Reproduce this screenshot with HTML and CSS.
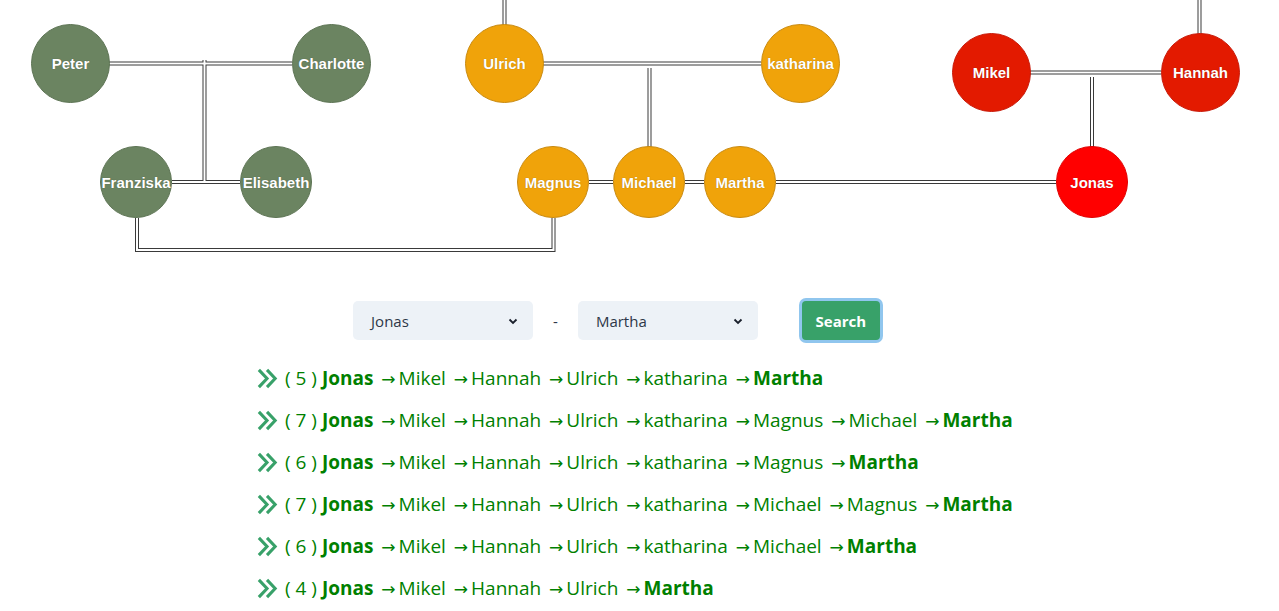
FILE: index.html
```html
<!DOCTYPE html>
<html>
<head>
<meta charset="utf-8">
<link rel="stylesheet" href="styles.css">
</head>
<body>
<div class="tree">
  <svg class="links" width="1279" height="265" viewBox="0 0 1279 265">
    <g class="outer">
      <path d="M109 63.5H292"/>
      <path d="M204.5 60V182"/>
      <path d="M172 182H240"/>
      <path d="M137 218V250H553.5V218"/>
      <path d="M504.5 0V25"/>
      <path d="M543 63.5H761"/>
      <path d="M649.5 68V147"/>
      <path d="M589 182H613M685 182H704M776 182H1056"/>
      <path d="M1030 72.5H1161"/>
      <path d="M1199.5 0V34"/>
      <path d="M1092 77V147"/>
    </g>
    <g class="inner">
      <path d="M109 63.5H292"/>
      <path d="M204.5 60V182"/>
      <path d="M172 182H240"/>
      <path d="M137 218V250H553.5V218"/>
      <path d="M504.5 0V25"/>
      <path d="M543 63.5H761"/>
      <path d="M649.5 68V147"/>
      <path d="M589 182H613M685 182H704M776 182H1056"/>
      <path d="M1030 72.5H1161"/>
      <path d="M1199.5 0V34"/>
      <path d="M1092 77V147"/>
    </g>
  </svg>
  <div class="node big green" style="left:31px;top:24px">Peter</div>
  <div class="node big green" style="left:292px;top:24px">Charlotte</div>
  <div class="node small green" style="left:100px;top:146px">Franziska</div>
  <div class="node small green" style="left:240px;top:146px">Elisabeth</div>
  <div class="node big orange" style="left:465px;top:24px">Ulrich</div>
  <div class="node big orange" style="left:761px;top:24px">katharina</div>
  <div class="node small orange" style="left:517px;top:146px">Magnus</div>
  <div class="node small orange" style="left:613px;top:146px">Michael</div>
  <div class="node small orange" style="left:704px;top:146px">Martha</div>
  <div class="node big red" style="left:952px;top:33px">Mikel</div>
  <div class="node big red" style="left:1161px;top:33px">Hannah</div>
  <div class="node small bright" style="left:1056px;top:146px">Jonas</div>
</div>

<div class="search">
  <div class="select"><span>Jonas</span><svg width="12" height="12" viewBox="0 0 12 12"><path d="M2.5 4.5L6 8L9.5 4.5" fill="none" stroke="#1a202c" stroke-width="1.8"/></svg></div>
  <span class="dash">-</span>
  <div class="select"><span>Martha</span><svg width="12" height="12" viewBox="0 0 12 12"><path d="M2.5 4.5L6 8L9.5 4.5" fill="none" stroke="#1a202c" stroke-width="1.8"/></svg></div>
  <button class="btn">Search</button>
</div>

<ul class="results">
  <li><svg class="chev" viewBox="0 0 24 24"><path d="M3 3L11.5 12L3 21M11.5 3L20 12L11.5 21"/></svg><span>( 5 ) <b>Jonas</b> <i class="arr">→</i>Mikel <i class="arr">→</i>Hannah <i class="arr">→</i>Ulrich <i class="arr">→</i>katharina <i class="arr">→</i><b>Martha</b></span></li>
  <li><svg class="chev" viewBox="0 0 24 24"><path d="M3 3L11.5 12L3 21M11.5 3L20 12L11.5 21"/></svg><span>( 7 ) <b>Jonas</b> <i class="arr">→</i>Mikel <i class="arr">→</i>Hannah <i class="arr">→</i>Ulrich <i class="arr">→</i>katharina <i class="arr">→</i>Magnus <i class="arr">→</i>Michael <i class="arr">→</i><b>Martha</b></span></li>
  <li><svg class="chev" viewBox="0 0 24 24"><path d="M3 3L11.5 12L3 21M11.5 3L20 12L11.5 21"/></svg><span>( 6 ) <b>Jonas</b> <i class="arr">→</i>Mikel <i class="arr">→</i>Hannah <i class="arr">→</i>Ulrich <i class="arr">→</i>katharina <i class="arr">→</i>Magnus <i class="arr">→</i><b>Martha</b></span></li>
  <li><svg class="chev" viewBox="0 0 24 24"><path d="M3 3L11.5 12L3 21M11.5 3L20 12L11.5 21"/></svg><span>( 7 ) <b>Jonas</b> <i class="arr">→</i>Mikel <i class="arr">→</i>Hannah <i class="arr">→</i>Ulrich <i class="arr">→</i>katharina <i class="arr">→</i>Michael <i class="arr">→</i>Magnus <i class="arr">→</i><b>Martha</b></span></li>
  <li><svg class="chev" viewBox="0 0 24 24"><path d="M3 3L11.5 12L3 21M11.5 3L20 12L11.5 21"/></svg><span>( 6 ) <b>Jonas</b> <i class="arr">→</i>Mikel <i class="arr">→</i>Hannah <i class="arr">→</i>Ulrich <i class="arr">→</i>katharina <i class="arr">→</i>Michael <i class="arr">→</i><b>Martha</b></span></li>
  <li><svg class="chev" viewBox="0 0 24 24"><path d="M3 3L11.5 12L3 21M11.5 3L20 12L11.5 21"/></svg><span>( 4 ) <b>Jonas</b> <i class="arr">→</i>Mikel <i class="arr">→</i>Hannah <i class="arr">→</i>Ulrich <i class="arr">→</i><b>Martha</b></span></li>
</ul>
</body>
</html>
```

FILE: styles.css
```css
html, body {
  margin: 0;
  padding: 0;
  background: #ffffff;
}
body {
  font-family: "Open Sans", "Noto Sans", sans-serif;
  overflow: hidden;
}
.tree {
  position: relative;
  height: 265px;
}
.links {
  position: absolute;
  left: 0;
  top: 0;
}
.links path {
  fill: none;
}
.outer path {
  stroke: #3a3a3a;
  stroke-width: 4;
}
.inner path {
  stroke: #ffffff;
  stroke-width: 2;
}
.node {
  position: absolute;
  box-sizing: border-box;
  border-radius: 50%;
  display: flex;
  align-items: center;
  justify-content: center;
  color: #ffffff;
  font-family: "Liberation Sans", Arial, sans-serif;
  font-weight: bold;
  font-size: 15px;
  text-shadow: 0 0 1px rgba(0,0,0,0.35);
  white-space: nowrap;
}
.big {
  width: 79px;
  height: 79px;
}
.small {
  width: 72px;
  height: 72px;
}
.green {
  background: #6b8461;
  border: 1px solid #5d7454;
}
.orange {
  background: #f0a30a;
  border: 1px solid #c98a10;
}
.red {
  background: #e31a00;
  border: 1px solid #c81a0a;
}
.bright {
  background: #ff0000;
  border: 1px solid #e00000;
}
.search {
  display: flex;
  align-items: center;
  justify-content: center;
  padding-right: 46px;
  margin-top: 36px;
  height: 39px;
}
.select {
  box-sizing: border-box;
  width: 180px;
  height: 39px;
  background: #edf2f7;
  border-radius: 5px;
  display: flex;
  align-items: center;
  justify-content: space-between;
  padding: 0 14px 0 18px;
  font-family: "Open Sans", "Noto Sans", sans-serif;
  font-size: 15px;
  color: #2d3748;
}
.dash {
  margin: 0 20px;
  font-size: 15px;
  color: #2d3748;
}
.btn {
  margin-left: 44px;
  width: 78px;
  height: 39px;
  border: none;
  border-radius: 4px;
  background: #38a169;
  color: #ffffff;
  font-family: "Open Sans", "Noto Sans", sans-serif;
  font-weight: bold;
  font-size: 15px;
  box-shadow: 0 0 0 3px #90c6ee;
  padding: 0;
}
.results {
  list-style: none;
  margin: 17px 0 0 256px;
  padding: 0;
}
.results li {
  display: flex;
  align-items: center;
  height: 42px;
  color: #008000;
  font-size: 19px;
  white-space: nowrap;
}
.results b {
  font-weight: bold;
}
.arr {
  font-style: normal;
  font-family: "DejaVu Sans", sans-serif;
  font-size: 17px;
  margin-left: 3px;
  margin-right: 3px;
}
.chev {
  width: 23px;
  height: 23px;
  margin-right: 6px;
  fill: none;
  stroke: #38a169;
  stroke-width: 3.2;
}
```
